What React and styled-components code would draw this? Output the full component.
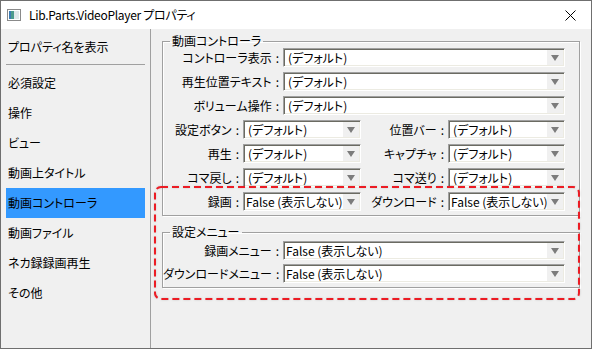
import React from 'react';
import styled, { createGlobalStyle } from 'styled-components';

const GlobalStyle = createGlobalStyle`
    html, body {
        margin: 0;
        padding: 0;
        background: #ffffff;
    }
    * {
        box-sizing: border-box;
    }
`

const Window = styled.div`
    width: 592px;
    height: 349px;
    border: 1px solid #6f6f6f;
    display: flex;
    flex-direction: column;
    font-family: "Noto Sans CJK JP", "Noto Sans", sans-serif;
    font-feature-settings: "palt";
    font-size: 12px;
    color: #000;
    background: #f0f0f0;
    overflow: hidden;
`

const TitleBar = styled.div`
    height: 28px;
    flex: none;
    display: flex;
    align-items: center;
    background: #ffffff;
    padding-left: 6px;
`

const TitleText = styled.span`
    margin-left: 8px;
    font-size: 12px;
    line-height: 16px;
    letter-spacing: -0.3px;
`

const CloseButton = styled.div`
    margin-left: auto;
    width: 42px;
    height: 28px;
    display: flex;
    align-items: center;
    justify-content: center;
`

const Body = styled.div`
    flex: 1;
    display: flex;
    min-height: 0;
`

const Sidebar = styled.div`
    width: 150px;
    flex: none;
    border-right: 1px solid #a0a0a0;
    padding: 3px 5px 0;
`

const NavItem = styled.div`
    height: 30px;
    line-height: 30px;
    padding-left: 2px;
    white-space: nowrap;
    background: ${props => (props.selected ? '#3399ff' : 'transparent')};
`

const NavDivider = styled.div`
    height: 1px;
    background: #a0a0a0;
    margin: 2px 0 3px;
`

const Content = styled.div`
    flex: 1;
    position: relative;
    padding: 5px 11px 0 11px;
`

const GroupBox = styled.fieldset`
    margin: ${props => props.gap || 0}px 0 0 0;
    padding: ${props => props.top || 0}px 0 4px 0;
    border: 1px solid #a0a0a0;
    box-shadow: inset 1px 1px 0 #ffffff, 1px 1px 0 #ffffff;
    min-width: 0;
`

const GroupTitle = styled.legend`
    margin-left: 7px;
    padding: 0 2px;
    line-height: 14px;
    font-size: 12px;
`

const Rows = styled.div`
    display: flex;
    flex-direction: column;
    gap: ${props => props.gap}px;
`

const FullRow = styled.div`
    display: grid;
    grid-template-columns: 120px 282px;
    align-items: center;
`

const PairRow = styled.div`
    display: grid;
    grid-template-columns: 80px 118px 87px 117px;
    align-items: center;
`

const Label = styled.span`
    text-align: right;
    padding-right: 4px;
    white-space: nowrap;
    line-height: 19px;
`

const Colon = styled.span`
    margin-left: 4px;
`

const ComboFrame = styled.div`
    height: 19px;
    display: flex;
    background: #ffffff;
    border-top: 1px solid #a0a0a0;
    border-left: 1px solid #a0a0a0;
    border-bottom: 1px solid #ffffff;
    border-right: 1px solid #ffffff;
    box-shadow: inset 1px 1px 0 #6b6b62, inset -1px -1px 0 #ecebe2;
`

const ComboText = styled.span`
    flex: 1;
    min-width: 0;
    padding-left: ${props => (props.plain ? 2 : 4)}px;
    padding-top: 1px;
    line-height: 16px;
    white-space: nowrap;
    overflow: hidden;
`

const ComboArrow = styled.span`
    width: 16px;
    flex: none;
    margin: 1px 1px 1px 0;
    background: #f0f0f0;
    display: flex;
    align-items: center;
    justify-content: center;
    &::after {
        content: '';
        border-left: 4px solid transparent;
        border-right: 4px solid transparent;
        border-top: 6px solid #7c7c7c;
    }
`

const Highlight = styled.svg`
    position: absolute;
    left: 3px;
    top: 157px;
    pointer-events: none;
    filter: drop-shadow(0 0 1px rgba(0, 0, 0, 0.15));
`

const Combo = ({ value }) => (
    <ComboFrame>
        <ComboText plain={value.startsWith('False')}>{value}</ComboText>
        <ComboArrow />
    </ComboFrame>
)

const Field = ({ children }) => (
    <Label>{children}<Colon>:</Colon></Label>
)

const AppIcon = () => (
    <svg width="14" height="12" viewBox="0 0 14 12">
        <rect x="0.5" y="0.5" width="13" height="11" fill="#fff" stroke="#8a8a8a" />
        <rect x="2" y="2" width="5" height="8" fill="#4c9a8c" />
        <rect x="2" y="2" width="2" height="8" fill="#3c7bb4" />
        <rect x="7" y="2" width="5" height="8" fill="#dfe7ea" />
    </svg>
)

const navItems = ['必須設定', '操作', 'ビュー', '動画上タイトル', '動画コントローラ', '動画ファイル', 'ネカ録録画再生', 'その他'];

const DEF = '(デフォルト)';
const OFF = 'False (表示しない)';

export default function App() {
    return (
        <>
            <GlobalStyle />
            <Window>
                <TitleBar>
                    <AppIcon />
                    <TitleText>Lib.Parts.VideoPlayer プロパティ</TitleText>
                    <CloseButton>
                        <svg width="11" height="11" viewBox="0 0 11 11">
                            <path d="M0.5 0.5 L10.5 10.5 M10.5 0.5 L0.5 10.5" stroke="#000" strokeWidth="1" />
                        </svg>
                    </CloseButton>
                </TitleBar>
                <Body>
                    <Sidebar>
                        <NavItem>プロパティ名を表示</NavItem>
                        <NavDivider />
                        {navItems.map(item => (
                            <NavItem key={item} selected={item === '動画コントローラ'}>{item}</NavItem>
                        ))}
                    </Sidebar>
                    <Content>
                        <GroupBox>
                            <GroupTitle>動画コントローラ</GroupTitle>
                            <Rows gap={5}>
                                <FullRow>
                                    <Field>コントローラ表示</Field>
                                    <Combo value={DEF} />
                                </FullRow>
                                <FullRow>
                                    <Field>再生位置テキスト</Field>
                                    <Combo value={DEF} />
                                </FullRow>
                                <FullRow>
                                    <Field>ボリューム操作</Field>
                                    <Combo value={DEF} />
                                </FullRow>
                                <PairRow>
                                    <Field>設定ボタン</Field>
                                    <Combo value={DEF} />
                                    <Field>位置バー</Field>
                                    <Combo value={DEF} />
                                </PairRow>
                                <PairRow>
                                    <Field>再生</Field>
                                    <Combo value={DEF} />
                                    <Field>キャプチャ</Field>
                                    <Combo value={DEF} />
                                </PairRow>
                                <PairRow>
                                    <Field>コマ戻し</Field>
                                    <Combo value={DEF} />
                                    <Field>コマ送り</Field>
                                    <Combo value={DEF} />
                                </PairRow>
                                <PairRow>
                                    <Field>録画</Field>
                                    <Combo value={OFF} />
                                    <Field>ダウンロード</Field>
                                    <Combo value={OFF} />
                                </PairRow>
                            </Rows>
                        </GroupBox>
                        <GroupBox gap={9} top={2}>
                            <GroupTitle>設定メニュー</GroupTitle>
                            <Rows gap={4}>
                                <FullRow>
                                    <Field>録画メニュー</Field>
                                    <Combo value={OFF} />
                                </FullRow>
                                <FullRow>
                                    <Field>ダウンロードメニュー</Field>
                                    <Combo value={OFF} />
                                </FullRow>
                            </Rows>
                        </GroupBox>
                        <Highlight width="426" height="114" viewBox="0 0 426 114">
                            <rect x="1" y="1" width="424" height="112" rx="6" ry="6"
                                fill="none" stroke="#ec1c24" strokeWidth="2" strokeDasharray="7 4" />
                        </Highlight>
                    </Content>
                </Body>
            </Window>
        </>
    )
}
